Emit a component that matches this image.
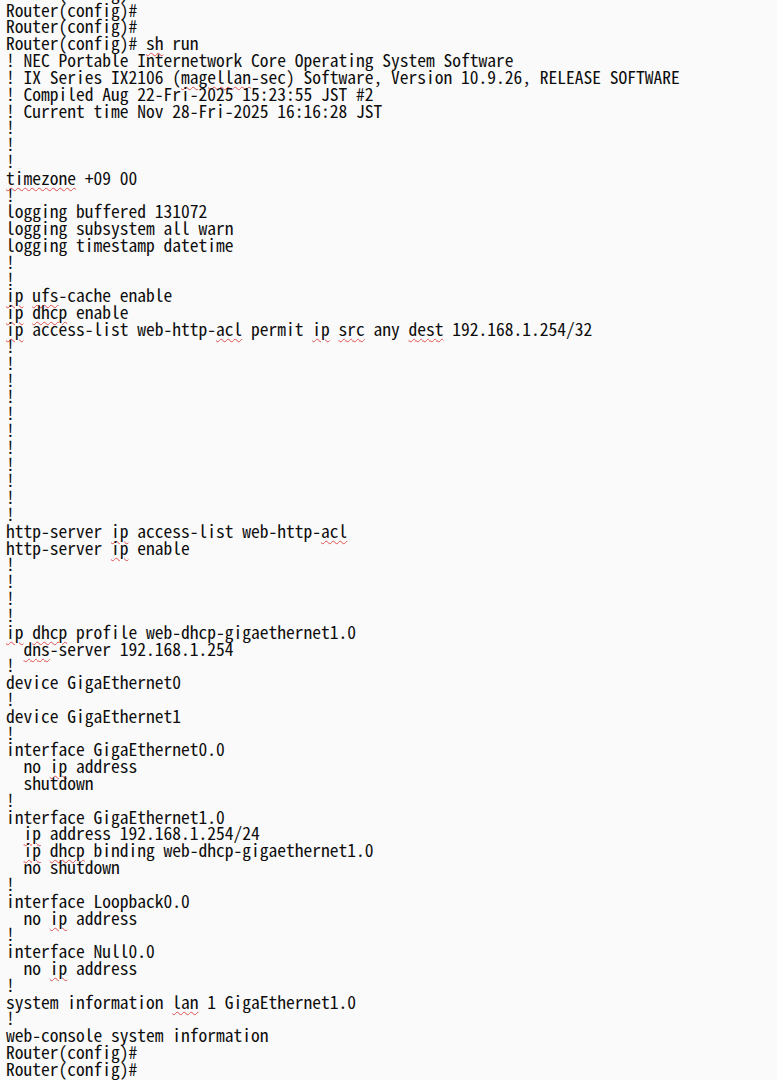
import React from "react";

type Seg = string | { u: string };

const U = (s: string): Seg => ({ u: s });

const lines: Seg[][] = [
  ["Router(config)#"],
  ["Router(config)#"],
  ["Router(config)#"],
  ["Router(config)# ", U("sh"), " run"],
  ["! NEC Portable Internetwork Core Operating System Software"],
  ["! IX Series IX2106 (", U("magellan"), "-sec) Software, Version 10.9.26, RELEASE SOFTWARE"],
  ["! Compiled Aug 22-Fri-2025 15:23:55 JST #2"],
  ["! Current time Nov 28-Fri-2025 16:16:28 JST"],
  ["!"],
  ["!"],
  ["!"],
  [U("timezone"), " +09 00"],
  ["!"],
  ["logging buffered 131072"],
  ["logging subsystem all warn"],
  ["logging timestamp datetime"],
  ["!"],
  ["!"],
  [U("ip"), " ", U("ufs"), "-cache enable"],
  [U("ip"), " ", U("dhcp"), " enable"],
  [U("ip"), " access-list web-http-", U("acl"), " permit ", U("ip"), " ", U("src"), " any ", U("dest"), " 192.168.1.254/32"],
  ["!"],
  ["!"],
  ["!"],
  ["!"],
  ["!"],
  ["!"],
  ["!"],
  ["!"],
  ["!"],
  ["!"],
  ["!"],
  ["http-server ", U("ip"), " access-list web-http-", U("acl")],
  ["http-server ", U("ip"), " enable"],
  ["!"],
  ["!"],
  ["!"],
  ["!"],
  [U("ip"), " ", U("dhcp"), " profile web-dhcp-gigaethernet1.0"],
  ["  ", U("dns"), "-server 192.168.1.254"],
  ["!"],
  ["device GigaEthernet0"],
  ["!"],
  ["device GigaEthernet1"],
  ["!"],
  ["interface GigaEthernet0.0"],
  ["  no ", U("ip"), " address"],
  ["  shutdown"],
  ["!"],
  ["interface GigaEthernet1.0"],
  ["  ", U("ip"), " address 192.168.1.254/24"],
  ["  ", U("ip"), " ", U("dhcp"), " binding web-dhcp-gigaethernet1.0"],
  ["  no shutdown"],
  ["!"],
  ["interface Loopback0.0"],
  ["  no ", U("ip"), " address"],
  ["!"],
  ["interface Null0.0"],
  ["  no ", U("ip"), " address"],
  ["!"],
  ["system information ", U("lan"), " 1 GigaEthernet1.0"],
  ["!"],
  ["web-console system information"],
  ["Router(config)#"],
  ["Router(config)#"],
];

export default function App() {
  return (
    <div className="w-[777px] h-[1080px] overflow-hidden bg-[#fafafa]">
      <div
        className="mt-[-15.2px] pl-[6px] text-[17.5px] leading-[16.825px] text-[#0d0d0d] whitespace-pre"
        style={{ fontFamily: '"Noto Sans Mono CJK JP", "Liberation Mono", monospace' }}
      >
        {lines.map((segs, i) => (
          <div key={i} className="h-[16.825px]">
            {segs.map((s, j) =>
              typeof s === "string" ? (
                <span key={j}>{s}</span>
              ) : (
                <span
                  key={j}
                  className="underline decoration-wavy decoration-[#e05050] decoration-[0.5px] underline-offset-[2px]"
                >
                  {s.u}
                </span>
              )
            )}
          </div>
        ))}
      </div>
    </div>
  );
}
